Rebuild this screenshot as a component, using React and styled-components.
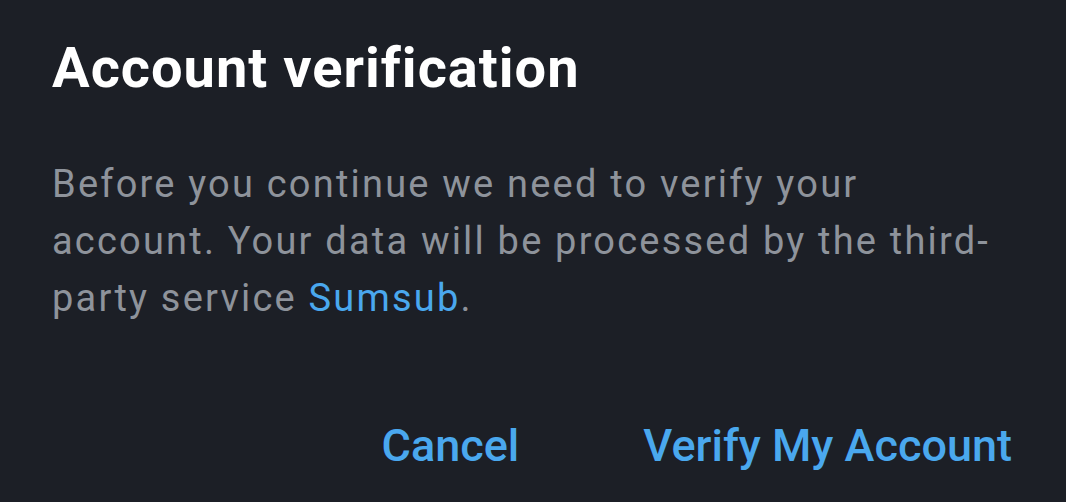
import React from "react";
import styled, { createGlobalStyle } from "styled-components";

const Global = createGlobalStyle`
  html, body { margin: 0; padding: 0; background: #1c1f26; }
  body { width: 1066px; height: 502px; overflow: hidden; }
`;

const Dialog = styled.div`
  box-sizing: border-box;
  width: 1066px;
  height: 502px;
  background: #1c1f26;
  padding: 36px 52px 0 52px;
  display: flex;
  flex-direction: column;
  font-family: Roboto, "Noto Sans", sans-serif;
`;

const Title = styled.h1`
  margin: 0;
  font-size: 56px;
  line-height: 64px;
  font-weight: 700;
  letter-spacing: 1px;
  color: #ffffff;
`;

const Body = styled.p`
  margin: 56px 0 0 0;
  width: 950px;
  font-size: 38px;
  line-height: 57px;
  font-weight: 400;
  letter-spacing: 2.2px;
  color: #8e939b;
`;

const Link = styled.a`
  color: #4aa8ee;
  text-decoration: none;
`;

const Actions = styled.div`
  margin-top: auto;
  margin-bottom: 28px;
  display: flex;
  justify-content: flex-end;
  gap: 124px;
  padding-right: 2px;
`;

const ActionButton = styled.button`
  background: none;
  border: none;
  padding: 0;
  font-family: inherit;
  font-size: 45px;
  line-height: 56px;
  font-weight: 500;
  color: #4aa8ee;
  cursor: pointer;
`;

export default function App() {
  return (
    <>
      <Global />
      <Dialog>
        <Title>Account verification</Title>
        <Body>
          Before you continue we need to verify your account. Your data will be processed by the third-party service{" "}
          <Link href="#">Sumsub</Link>.
        </Body>
        <Actions>
          <ActionButton>Cancel</ActionButton>
          <ActionButton>Verify My Account</ActionButton>
        </Actions>
      </Dialog>
    </>
  );
}
